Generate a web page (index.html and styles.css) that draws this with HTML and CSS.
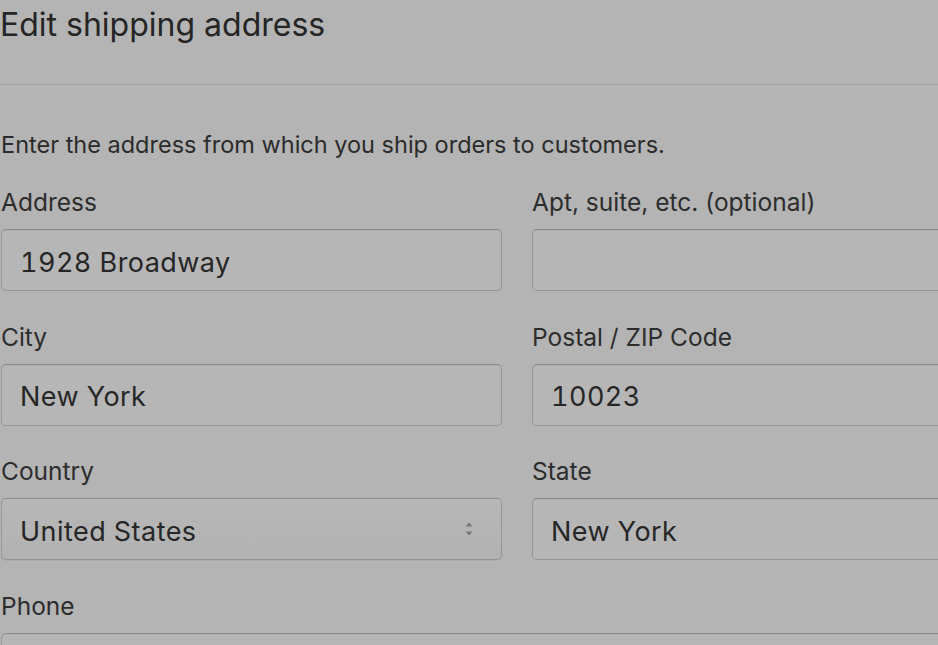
FILE: index.html
```html
<!DOCTYPE html>
<html lang="en">
<head>
<meta charset="utf-8">
<title>Edit shipping address</title>
<link rel="stylesheet" href="styles.css">
</head>
<body>
<div class="modal">
  <header class="modal-header">
    <h1 class="modal-title">Edit shipping address</h1>
  </header>
  <section class="modal-body">
    <p class="intro">Enter the address from which you ship orders to customers.</p>
    <div class="form-grid">
      <div class="field">
        <label class="label">Address</label>
        <div class="input"><span class="value">1928 Broadway</span></div>
      </div>
      <div class="field">
        <label class="label">Apt, suite, etc. (optional)</label>
        <div class="input"></div>
      </div>
      <div class="field">
        <label class="label">City</label>
        <div class="input"><span class="value">New York</span></div>
      </div>
      <div class="field">
        <label class="label">Postal / ZIP Code</label>
        <div class="input"><span class="value">10023</span></div>
      </div>
      <div class="field">
        <label class="label">Country</label>
        <div class="input select">
          <span class="value">United States</span>
          <svg class="arrows" width="8" height="16" viewBox="0 0 8 16" aria-hidden="true">
            <path d="M0.5 5.5 L4 1.5 L7.5 5.5 Z" fill="#7a7a7a"/>
            <path d="M0.5 10.5 L4 14.5 L7.5 10.5 Z" fill="#7a7a7a"/>
          </svg>
        </div>
      </div>
      <div class="field">
        <label class="label">State</label>
        <div class="input"><span class="value">New York</span></div>
      </div>
      <div class="field field-wide">
        <label class="label">Phone</label>
        <div class="input"></div>
      </div>
    </div>
  </section>
</div>
</body>
</html>
```
FILE: styles.css
```css
html, body {
  margin: 0;
  padding: 0;
  background: #b4b4b4;
  overflow: hidden;
}

body {
  width: 938px;
  height: 645px;
  font-family: Inter, "Noto Sans", "Liberation Sans", sans-serif;
  color: #2a2a2a;
}

.modal {
  width: 1040px;
}

.modal-header {
  padding: 5px 0 39px 0;
  border-bottom: 1px solid #a3a3a3;
}

.modal-title {
  margin: 0;
  font-size: 32px;
  line-height: 40px;
  font-weight: 400;
  color: #252525;
}

.modal-body {
  padding: 44px 0 0 1px;
}

.intro {
  margin: 0 0 25px 0;
  font-size: 23.5px;
  line-height: 32px;
  color: #2b2b2b;
}

.form-grid {
  display: grid;
  grid-template-columns: 501px 501px;
  column-gap: 30px;
  row-gap: 29.7px;
}

.field {
  display: flex;
  flex-direction: column;
}

.field-wide {
  grid-column: 1 / -1;
}

.label {
  font-size: 24.5px;
  line-height: 32px;
  margin-bottom: 11px;
  color: #2d2d2d;
}

.input {
  box-sizing: border-box;
  height: 62px;
  border: 1px solid #969696;
  border-top-color: #8b8b8b;
  border-radius: 5px;
  background: #b6b6b6;
  box-shadow: inset 0 1px 0 rgba(0, 0, 0, 0.04);
  display: flex;
  align-items: center;
  padding: 4px 18px 0 18px;
}

.value {
  font-size: 27px;
  letter-spacing: 0.45px;
  font-variant-numeric: tabular-nums;
  color: #262626;
}

.select {
  justify-content: space-between;
  background: linear-gradient(#b7b7b7, #b2b2b2);
  box-shadow: 0 1px 0 rgba(0, 0, 0, 0.05);
  padding-right: 28px;
}

.arrows {
  display: block;
  margin-top: -4px;
}
```
